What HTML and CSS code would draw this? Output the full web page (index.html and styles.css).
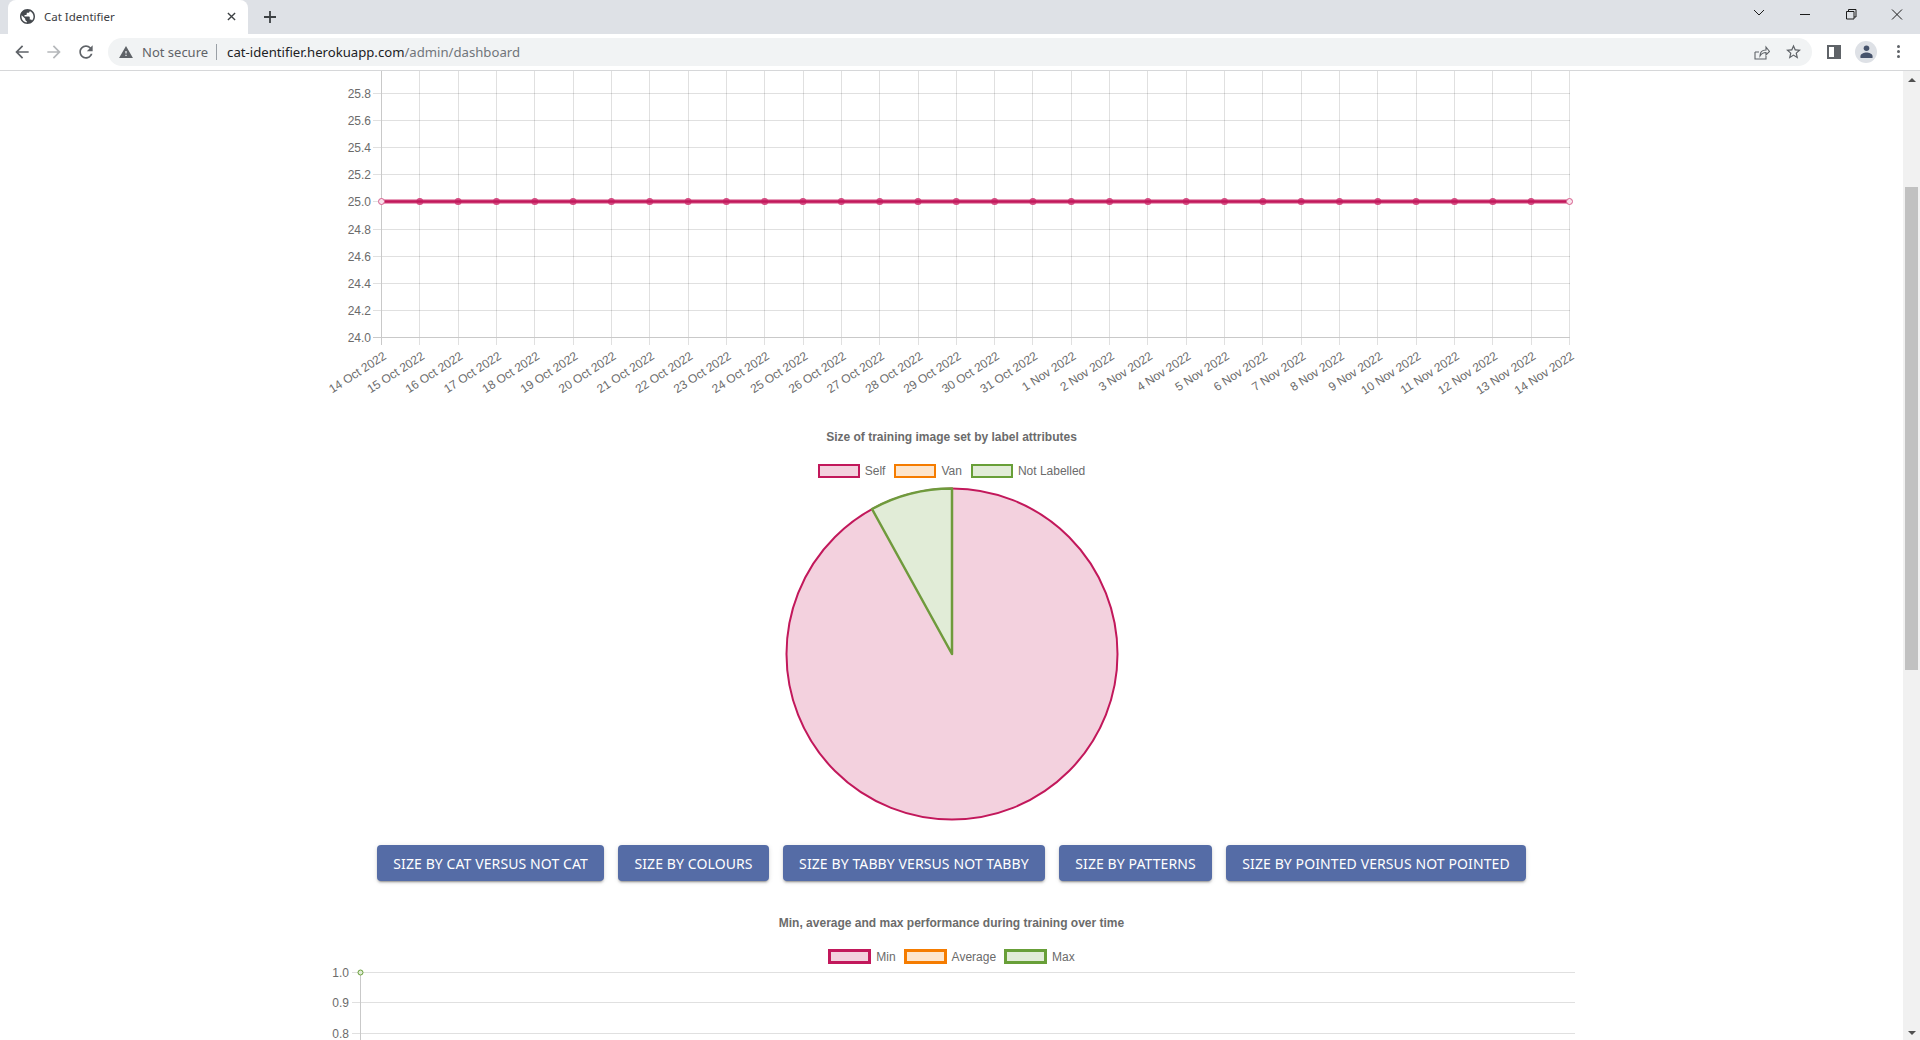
FILE: index.html
```html
<!DOCTYPE html>
<html lang="en">
<head>
    <meta charset="UTF-8" />
    <title>Cat Identifier</title>
    <link rel="stylesheet" href="styles.css">
</head>
<body>
    <!--browser chrome-->
    <header class="tabstrip">
        <div class="tab">
            <svg class="favicon" viewBox="2 2 20 20"><path d="M12 2C6.48 2 2 6.48 2 12s4.48 10 10 10 10-4.48 10-10S17.52 2 12 2zm-1 17.93c-3.95-.49-7-3.85-7-7.93 0-.62.08-1.21.21-1.79L9 15v1c0 1.1.9 2 2 2v1.93zm6.9-2.54c-.26-.81-1-1.39-1.9-1.39h-1v-3c0-.55-.45-1-1-1H8v-2h2c.55 0 1-.45 1-1V7h2c1.1 0 2-.9 2-2v-.41c2.93 1.19 5 4.06 5 7.41 0 2.08-.8 3.97-2.1 5.39z"/></svg>
            <span class="tab-title">Cat Identifier</span>
            <svg class="tab-close" viewBox="0 0 10 10"><path d="M1 1l8 8M9 1l-8 8"/></svg>
        </div>
        <svg class="new-tab" viewBox="0 0 12 12"><path d="M6 0v12M0 6h12"/></svg>
        <div class="window-controls">
            <svg viewBox="0 0 46 28"><path d="M18 10l5 5 5-5" /></svg>
            <svg viewBox="0 0 46 28"><path d="M18 14.5h10"/></svg>
            <svg viewBox="0 0 46 28"><path d="M18.5 11.5h7.500v7.500h-7.500zM20.500 11.500v-2h7.500v7.500h-2"/></svg>
            <svg viewBox="0 0 46 28"><path d="M18 9.500l10 10M28 9.500l-10 10"/></svg>
        </div>
    </header>
    <div class="toolbar">
        <svg class="nav-icon" viewBox="0 0 24 24"><path d="M20 11H7.830l5.590-5.590L12 4l-8 8 8 8 1.410-1.410L7.830 13H20v-2z"/></svg>
        <svg class="nav-icon nav-off" viewBox="0 0 24 24"><path d="M12 4l-1.410 1.410L16.170 11H4v2h12.170l-5.580 5.590L12 20l8-8z"/></svg>
        <svg class="nav-icon" viewBox="0 0 24 24"><path d="M17.650 6.350C16.200 4.900 14.210 4 12 4c-4.420 0-7.990 3.580-7.990 8s3.570 8 7.990 8c3.730 0 6.840-2.550 7.730-6h-2.080c-.82 2.330-3.040 4-5.650 4-3.310 0-6-2.690-6-6s2.690-6 6-6c1.660 0 3.140.69 4.220 1.780L13 11h7V4l-2.350 2.350z"/></svg>
        <div class="omnibox">
            <svg class="warn" viewBox="1 2 22 19"><path d="M1 21h22L12 2 1 21zm12-3h-2v-2h2v2zm0-4h-2v-4h2v4z"/></svg>
            <span class="not-secure">Not secure</span>
            <span class="url"><b>cat-identifier.herokuapp.com</b>/admin/dashboard</span>
            <svg class="share" viewBox="0 0 16 16"><path d="M1 8v7h11v-3M1 8h4M6 12c0-4 2.500-6 6-6V3l3.500 4.500L12 11V8.500c-3 0-4.500 1-6 3.500z"/></svg>
            <svg class="star" viewBox="2 2 20 19"><path d="M22 9.240l-7.190-.62L12 2 9.190 8.630 2 9.240l5.460 4.730L5.820 21 12 17.270 18.180 21l-1.630-7.030L22 9.240zM12 15.400l-3.760 2.270 1-4.280-3.320-2.880 4.380-.38L12 6.100l1.710 4.040 4.380.38-3.320 2.880 1 4.280L12 15.400z"/></svg>
        </div>
        <span class="side-panel"></span>
        <span class="avatar">
            <svg viewBox="0 0 14 14"><circle cx="7" cy="3.500" r="3"/><path d="M.5 14v-2c0-2.500 4-3.800 6.500-3.800s6.500 1.300 6.500 3.800v2z"/></svg>
        </span>
        <span class="menu-dots"><i></i><i></i><i></i></span>
    </div>

    <div class="viewport">
        <main class="page">
            <!--time chart, top part scrolled away-->
            <svg class="chart-top" viewBox="0 0 1903 355">
                <g class="grid">
                    <path d="M373 22.500H1569.500M373 49.500H1569.500M373 76.500H1569.500M373 103.500H1569.500M373 130.500H1569.500M373 158.500H1569.500M373 185.500H1569.500M373 212.500H1569.500M373 239.500H1569.500"/>
                    <path d="M419.500 0V274M458.500 0V274M496.500 0V274M534.500 0V274M573.500 0V274M611.500 0V274M649.500 0V274M688.500 0V274M726.500 0V274M764.500 0V274M803.500 0V274M841.500 0V274M879.500 0V274M918.500 0V274M956.500 0V274M994.500 0V274M1032.500 0V274M1071.500 0V274M1109.500 0V274M1147.500 0V274M1186.500 0V274M1224.500 0V274M1262.500 0V274M1301.500 0V274M1339.500 0V274M1377.500 0V274M1416.500 0V274M1454.500 0V274M1492.500 0V274M1531.500 0V274M1569.500 0V274"/>
                </g>
                <path class="axis" d="M381.500 0V274M373 266.500H1569.500"/>
                <g class="ytick">
                    <text x="371" y="27">25.8</text>
                    <text x="371" y="54">25.6</text>
                    <text x="371" y="81">25.4</text>
                    <text x="371" y="108">25.2</text>
                    <text x="371" y="135">25.0</text>
                    <text x="371" y="163">24.8</text>
                    <text x="371" y="190">24.6</text>
                    <text x="371" y="217">24.4</text>
                    <text x="371" y="244">24.2</text>
                    <text x="371" y="271">24.0</text>
                </g>
                <path class="line-glow" d="M381.500 130.500H1569.500"/>
                <path class="line-dots" d="M419.800 130.500h0M458.100 130.500h0M496.500 130.500h0M534.800 130.500h0M573.100 130.500h0M611.400 130.500h0M649.700 130.500h0M688.100 130.500h0M726.400 130.500h0M764.700 130.500h0M803 130.500h0M841.300 130.500h0M879.700 130.500h0M918 130.500h0M956.300 130.500h0M994.600 130.500h0M1032.900 130.500h0M1071.300 130.500h0M1109.600 130.500h0M1147.900 130.500h0M1186.200 130.500h0M1224.500 130.500h0M1262.900 130.500h0M1301.200 130.500h0M1339.500 130.500h0M1377.800 130.500h0M1416.100 130.500h0M1454.500 130.500h0M1492.800 130.500h0M1531.100 130.500h0"/>
                <path class="line-main" d="M381.500 130.500H1569.500"/>
                <circle class="line-end" cx="381.500" cy="130.500" r="3"/>
                <circle class="line-end" cx="1569.500" cy="130.500" r="3"/>
                <g class="xtick">
                    <text transform="translate(387 287) rotate(-33)">14 Oct 2022</text>
                    <text transform="translate(425.300 287) rotate(-33)">15 Oct 2022</text>
                    <text transform="translate(463.600 287) rotate(-33)">16 Oct 2022</text>
                    <text transform="translate(502 287) rotate(-33)">17 Oct 2022</text>
                    <text transform="translate(540.300 287) rotate(-33)">18 Oct 2022</text>
                    <text transform="translate(578.600 287) rotate(-33)">19 Oct 2022</text>
                    <text transform="translate(616.900 287) rotate(-33)">20 Oct 2022</text>
                    <text transform="translate(655.200 287) rotate(-33)">21 Oct 2022</text>
                    <text transform="translate(693.600 287) rotate(-33)">22 Oct 2022</text>
                    <text transform="translate(731.900 287) rotate(-33)">23 Oct 2022</text>
                    <text transform="translate(770.200 287) rotate(-33)">24 Oct 2022</text>
                    <text transform="translate(808.500 287) rotate(-33)">25 Oct 2022</text>
                    <text transform="translate(846.800 287) rotate(-33)">26 Oct 2022</text>
                    <text transform="translate(885.200 287) rotate(-33)">27 Oct 2022</text>
                    <text transform="translate(923.500 287) rotate(-33)">28 Oct 2022</text>
                    <text transform="translate(961.800 287) rotate(-33)">29 Oct 2022</text>
                    <text transform="translate(1000.100 287) rotate(-33)">30 Oct 2022</text>
                    <text transform="translate(1038.400 287) rotate(-33)">31 Oct 2022</text>
                    <text transform="translate(1076.800 287) rotate(-33)">1 Nov 2022</text>
                    <text transform="translate(1115.100 287) rotate(-33)">2 Nov 2022</text>
                    <text transform="translate(1153.400 287) rotate(-33)">3 Nov 2022</text>
                    <text transform="translate(1191.700 287) rotate(-33)">4 Nov 2022</text>
                    <text transform="translate(1230 287) rotate(-33)">5 Nov 2022</text>
                    <text transform="translate(1268.400 287) rotate(-33)">6 Nov 2022</text>
                    <text transform="translate(1306.700 287) rotate(-33)">7 Nov 2022</text>
                    <text transform="translate(1345 287) rotate(-33)">8 Nov 2022</text>
                    <text transform="translate(1383.300 287) rotate(-33)">9 Nov 2022</text>
                    <text transform="translate(1421.600 287) rotate(-33)">10 Nov 2022</text>
                    <text transform="translate(1460 287) rotate(-33)">11 Nov 2022</text>
                    <text transform="translate(1498.300 287) rotate(-33)">12 Nov 2022</text>
                    <text transform="translate(1536.600 287) rotate(-33)">13 Nov 2022</text>
                    <text transform="translate(1574.900 287) rotate(-33)">14 Nov 2022</text>
                </g>
            </svg>

            <!--pie chart-->
            <h2 class="chart-title">Size of training image set by label attributes</h2>
            <ul class="legend">
                <li><span class="swatch pink"></span>Self</li>
                <li><span class="swatch orange"></span>Van</li>
                <li><span class="swatch green"></span>Not Labelled</li>
            </ul>
            <svg class="pie" viewBox="0 0 340 340">
                <circle class="slice-pink" cx="170" cy="170" r="165.500"/>
                <path class="slice-green" d="M170 170L90 25A165.500 165.500 0 0 1 170 4.500Z"/>
            </svg>

            <div class="btn-row">
                <button class="btn">Size by cat versus not cat</button>
                <button class="btn">Size by colours</button>
                <button class="btn">Size by tabby versus not tabby</button>
                <button class="btn">Size by patterns</button>
                <button class="btn">Size by pointed versus not pointed</button>
            </div>

            <!--performance chart, cut by the window-->
            <h2 class="chart-title second">Min, average and max performance during training over time</h2>
            <ul class="legend thick">
                <li><span class="swatch pink"></span>Min</li>
                <li><span class="swatch orange"></span>Average</li>
                <li><span class="swatch green"></span>Max</li>
            </ul>
            <svg class="chart-bottom" viewBox="0 0 1903 74">
                <g class="grid">
                    <path d="M352 6.500H1575M352 36.500H1575M352 67.500H1575"/>
                </g>
                <path class="axis" d="M360.500 6V74"/>
                <g class="ytick">
                    <text x="349" y="11">1.0</text>
                    <text x="349" y="41">0.9</text>
                    <text x="349" y="72">0.8</text>
                </g>
                <circle class="max-dot" cx="360.500" cy="6.500" r="2.500"/>
            </svg>
        </main>
        <aside class="scrollbar">
            <span class="arrow-up"></span>
            <span class="thumb"></span>
            <span class="arrow-down"></span>
        </aside>
    </div>
</body>
</html>
```

FILE: styles.css
```css
*{
    margin:0;
    padding:0;
    box-sizing:border-box;
}
html,body{
    width:1920px;
    height:1040px;
    overflow:hidden;
    background:#fff;
}
body{
    font-family:"Liberation Sans",Arial,sans-serif;
    color:#6b6b6b;
}

/*tab strip*/
.tabstrip{
    height:34px;
    background:#dee1e6;
    display:flex;
    align-items:center;
    padding-left:8px;
}
.tab{
    width:240px;
    height:34px;
    background:#fff;
    border-radius:8px 8px 0 0;
    display:flex;
    align-items:center;
    padding:0 12px 1px;
    font-family:"Noto Sans",sans-serif;
    font-size:11.500px;
    color:#3c4043;
}
.favicon{
    width:15px;
    height:15px;
    fill:#45494e;
    flex:none;
}
.tab-title{
    margin-left:9px;
    flex:1;
}
.tab-close{
    width:9px;
    height:9px;
    stroke:#3c4043;
    stroke-width:1.500;
    fill:none;
}
.new-tab{
    width:12px;
    height:12px;
    stroke:#3c4043;
    stroke-width:1.800;
    margin-left:16px;
}
.window-controls{
    margin-left:auto;
    display:flex;
    align-items:flex-start;
    align-self:flex-start;
}
.window-controls svg{
    width:46px;
    height:28px;
    fill:none;
    stroke:#1c1c1c;
    stroke-width:1;
}

/*toolbar*/
.toolbar{
    height:37px;
    background:#fff;
    border-bottom:1px solid #d6d7d9;
    display:flex;
    align-items:center;
    padding:0 0 1px 12px;
}
.nav-icon{
    width:20px;
    height:20px;
    fill:#5f6368;
    flex:none;
    margin-right:12px;
}
.nav-off{
    fill:#b5b8bb;
}
.omnibox{
    width:1704px;
    height:28px;
    background:#f1f3f4;
    border-radius:14px;
    display:flex;
    align-items:center;
    padding-left:11px;
    font-family:"Noto Sans",sans-serif;
    font-size:13px;
}
.warn{
    width:14px;
    height:12px;
    fill:#5f6368;
    flex:none;
}
.not-secure{
    color:#5f6368;
    margin-left:9px;
    padding-right:8px;
    border-right:1px solid #9aa0a6;
    line-height:16px;
}
.url{
    color:#70757a;
    margin-left:10px;
    font-size:13.150px;
}
.url b{
    font-weight:400;
    color:#202124;
}
.share{
    width:16px;
    height:16px;
    fill:none;
    stroke:#5f6368;
    stroke-width:1.100;
    margin-left:auto;
    margin-right:16px;
}
.star{
    width:15px;
    height:15px;
    fill:#5f6368;
    margin-right:11px;
}
.side-panel{
    width:14px;
    height:14px;
    margin-left:15px;
    border:solid #5f6368;
    border-width:2px 7px 2px 2px;
    flex:none;
}
.avatar{
    width:22px;
    height:22px;
    margin-left:14px;
    border-radius:50%;
    background:#dee1e6;
    display:flex;
    align-items:center;
    justify-content:center;
    flex:none;
}
.avatar svg{
    width:13px;
    height:13px;
    fill:#46536b;
}
.menu-dots{
    display:flex;
    flex-direction:column;
    gap:2px;
    margin-left:20px;
}
.menu-dots i{
    width:3px;
    height:3px;
    border-radius:50%;
    background:#5f6368;
}

/*page area*/
.viewport{
    height:969px;
    display:flex;
}
.page{
    width:1903px;
    height:969px;
    overflow:hidden;
    display:flex;
    flex-direction:column;
    align-items:center;
}
.chart-top,.chart-bottom,.pie{
    display:block;
    flex:none;
}
.chart-top{
    width:1903px;
    height:355px;
}
.chart-bottom{
    width:1903px;
    height:74px;
    margin-top:2px;
}
.grid path{
    stroke:rgba(0,0,0,.12);
    stroke-width:1;
    fill:none;
    shape-rendering:crispEdges;
}
.axis{
    stroke:#c9c9c9;
    stroke-width:1;
    fill:none;
    shape-rendering:crispEdges;
}
.ytick text,.xtick text{
    font-size:12px;
    fill:#6b6b6b;
    text-anchor:end;
}
.line-glow{
    stroke:#e07fa4;
    stroke-width:4.500;
    fill:none;
}
.line-main{
    stroke:#c2185b;
    stroke-width:2.500;
    fill:none;
}
.line-dots{
    stroke:#d2487f;
    stroke-width:7;
    stroke-linecap:round;
    fill:none;
}
.line-end{
    fill:#f9e3ec;
    stroke:#d65d8c;
    stroke-width:1;
}
.max-dot{
    fill:#e1ecd7;
    stroke:#689f38;
    stroke-width:1;
}
.chart-title{
    height:22px;
    line-height:22px;
    font-size:12px;
    font-weight:700;
    color:#6b6b6b;
    text-align:center;
}
.chart-title.second{
    margin-top:31px;
}
.legend{
    list-style:none;
    display:flex;
    justify-content:center;
    gap:9px;
    font-size:12px;
    margin-top:16px;
    height:14px;
    line-height:14px;
}
.legend li{
    display:flex;
    align-items:center;
    gap:5px;
}
.swatch{
    width:42px;
    height:14px;
    border:2px solid;
    display:block;
}
.swatch.pink{
    border-color:#c2185b;
    background:#f3d1de;
}
.swatch.orange{
    border-color:#f57c00;
    background:#fde5cc;
}
.swatch.green{
    border-color:#689f38;
    background:#e1ecd7;
}
.legend.thick{
    margin-top:15px;
    height:15px;
    gap:8px;
}
.thick .swatch{
    width:43px;
    height:15px;
    border-width:3px;
}
.pie{
    width:340px;
    height:340px;
    margin-top:6px;
}
.slice-pink{
    fill:#f3d1de;
    stroke:#c2185b;
    stroke-width:2;
}
.slice-green{
    fill:#e1ecd7;
    stroke:#6f9a3c;
    stroke-width:2.500;
    stroke-linejoin:round;
}
.btn-row{
    display:flex;
    gap:14.500px;
    margin-top:21px;
}
.btn{
    height:36px;
    padding:0 16px;
    border:0;
    border-radius:4px;
    background:#556ca6;
    color:#fff;
    font-family:"Noto Sans",sans-serif;
    font-size:14px;
    letter-spacing:.1px;
    text-transform:uppercase;
    box-shadow:0 3px 1px -2px rgba(0,0,0,.2),0 2px 2px 0 rgba(0,0,0,.14),0 1px 5px 0 rgba(0,0,0,.12);
}

/*scrollbar*/
.scrollbar{
    width:17px;
    height:969px;
    background:#f1f1f1;
    display:flex;
    flex-direction:column;
    align-items:center;
    padding:6px 0 5px;
}
.arrow-up{
    border:solid transparent;
    border-width:0 4px 4px;
    border-bottom-color:#505050;
    margin-top:1px;
}
.thumb{
    width:13px;
    height:483px;
    background:#c1c1c1;
    margin-top:105px;
}
.arrow-down{
    border:solid transparent;
    border-width:4px 4px 0;
    border-top-color:#505050;
    margin-top:auto;
}
```
